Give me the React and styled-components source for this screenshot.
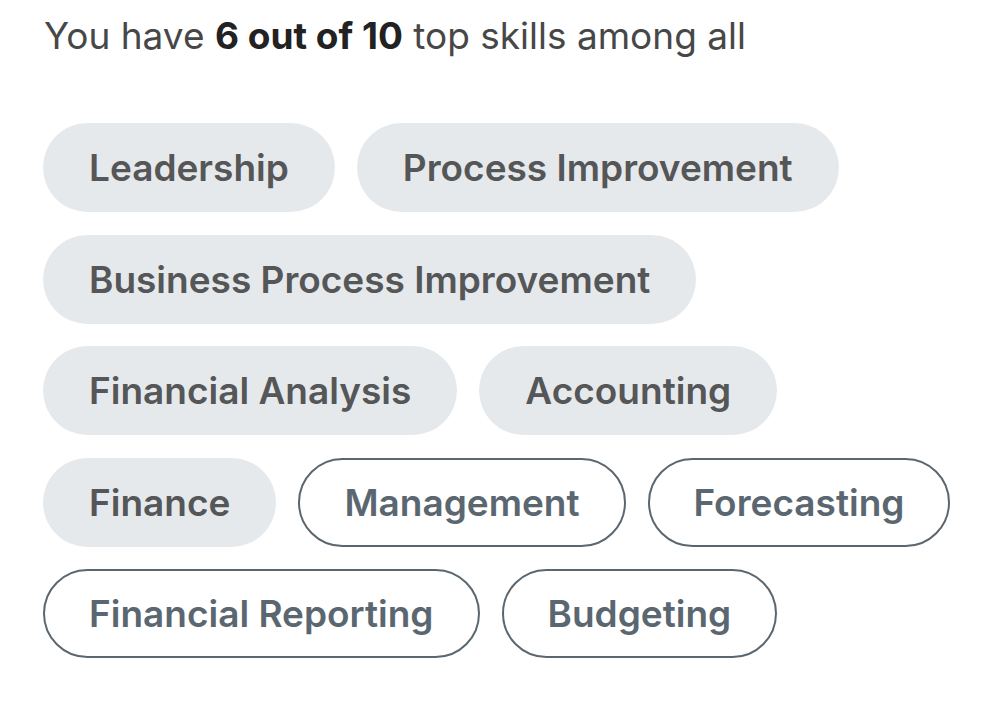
import React from "react";
import styled, { createGlobalStyle } from "styled-components";

const GlobalStyle = createGlobalStyle`
  body {
    margin: 0;
    background: #ffffff;
    font-family: "Inter", "Liberation Sans", sans-serif;
  }
`;

const Page = styled.div`
  padding: 14px 44px 0 43px;
`;

const Heading = styled.p`
  margin: 0 0 65px 1px;
  font-size: 37px;
  line-height: 44px;
  color: #474747;
  font-weight: 400;

  b {
    font-weight: 700;
    color: #222;
  }
`;

const Pills = styled.div`
  display: flex;
  flex-direction: column;
  gap: 22.5px;
`;

const Row = styled.div`
  display: flex;
  gap: 22px;
`;

const Pill = styled.span`
  box-sizing: border-box;
  display: inline-flex;
  align-items: center;
  height: 89px;
  padding: 0 44px 0 44px;
  border-radius: 45px;
  font-size: 37px;
  font-weight: 600;
  white-space: nowrap;
  background: ${(p) => (p.$outline ? "#ffffff" : "#e6e9ec")};
  color: ${(p) => (p.$outline ? "#5b6770" : "#555657")};
  border: 2px solid ${(p) => (p.$outline ? "#5b6770" : "transparent")};
`;

const rows = [
  [["Leadership"], ["Process Improvement"]],
  [["Business Process Improvement"]],
  [["Financial Analysis"], ["Accounting"]],
  [["Finance"], ["Management", true], ["Forecasting", true]],
  [["Financial Reporting", true], ["Budgeting", true]],
];

export default function App() {
  return (
    <Page>
      <GlobalStyle />
      <Heading>
        You have <b>6 out of 10</b> top skills among all
      </Heading>
      <Pills>
        {rows.map((row, i) => (
          <Row key={i}>
            {row.map(([label, outline]) => (
              <Pill key={label} $outline={outline}>
                {label}
              </Pill>
            ))}
          </Row>
        ))}
      </Pills>
    </Page>
  );
}
